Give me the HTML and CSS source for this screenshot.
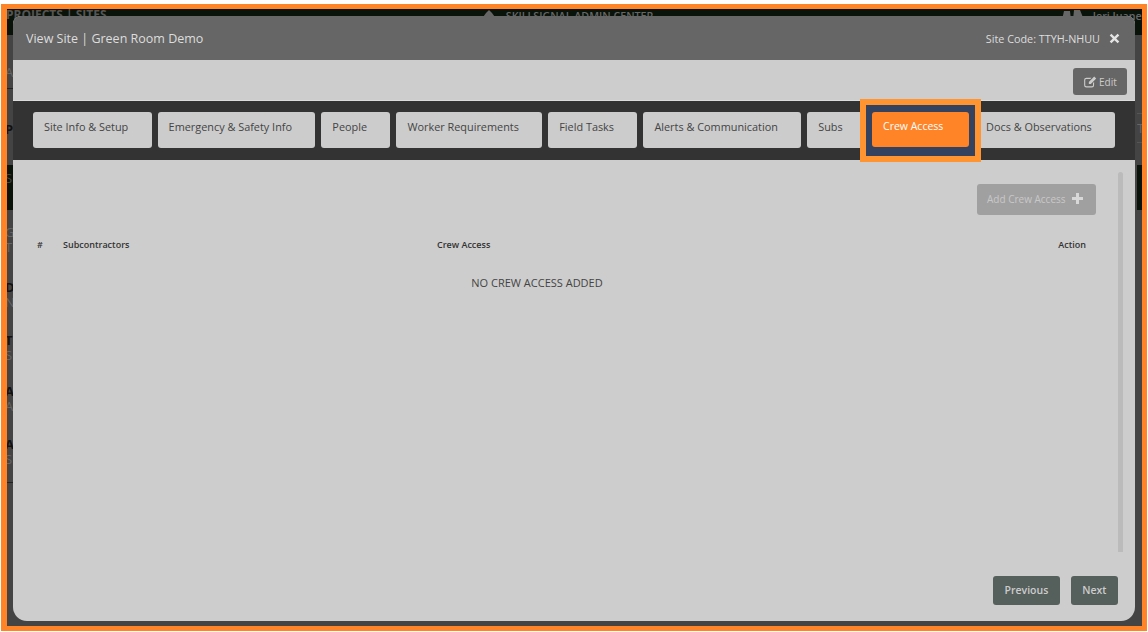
FILE: index.html
```html
<!DOCTYPE html>
<html lang="en">
  <head>
    <meta charset="utf-8" />
    <title>View Site</title>
    <link rel="stylesheet" href="styles.css">
  </head>
  <body>
    <div id="page">
      <!-- the dimmed admin page behind the modal -->
      <div id="backdrop">
        <div id="topnav">
          <span class="nav-title">PROJECTS | SITES</span>
          <span class="nav-center">
            <svg class="nav-logo" viewBox="0 0 16 10"><path d="M0 10 L5 3 L8 0 L11 3 L16 10 Z"/></svg>
            SKILLSIGNAL ADMIN CENTER
          </span>
          <span class="nav-user">
            <svg class="nav-logo" viewBox="0 0 24 10"><path d="M0 10 L2 1 L8 1 L9 10 Z M11 10 L12 0 L18 0 L22 10 Z"/></svg>
            Jeri Juaner
          </span>
        </div>
        <div id="backrows">
          <div class="side side-left">
            <div></div>
            <div class="frag">A</div>
            <div class="rule"></div>
            <div></div>
            <div class="frag frag-dark">P</div>
            <div></div>
            <div class="band">S</div>
            <div></div>
            <div class="frag">G</div>
            <div class="frag">T</div>
            <div></div>
            <div class="frag frag-dark">D</div>
            <div class="frag">N</div>
            <div></div>
            <div class="frag frag-dark">T</div>
            <div class="frag">S</div>
            <div></div>
            <div class="frag frag-dark">A</div>
            <div class="frag">A</div>
            <div></div>
            <div class="frag frag-dark">A</div>
            <div class="frag">S</div>
            <div></div>
            <div class="rule"></div>
          </div>
          <div class="side side-right">
            <div></div>
            <div class="cell">TE</div>
            <div></div>
            <div class="band"></div>
          </div>
        </div>
      </div>

      <div id="modal">
        <div id="modal-head">
          <span class="modal-title">View Site | Green Room Demo</span>
          <span class="site-code">Site Code: TTYH-NHUU</span>
          <svg class="icon-close" viewBox="0 0 12 12"><path d="M2.6 .8 L6 4.2 L9.4 .8 L11.2 2.6 L7.8 6 L11.2 9.4 L9.4 11.2 L6 7.8 L2.6 11.2 L.8 9.4 L4.2 6 L.8 2.6 Z"/></svg>
        </div>

        <div id="toolbar">
          <button class="btn-edit">
            <svg class="icon-edit" viewBox="0 0 14 13"><path d="M2.5 2 H8 L6.8 3.2 H2.5 A1.2 1.2 0 0 0 1.3 4.4 V10 A1.2 1.2 0 0 0 2.5 11.2 H8.5 A1.2 1.2 0 0 0 9.7 10 V7.6 L10.9 6.4 V10 A2.4 2.4 0 0 1 8.5 12.4 H2.5 A2.4 2.4 0 0 1 .1 10 V4.4 A2.4 2.4 0 0 1 2.5 2 Z M11 .6 L13.2 2.8 L7.4 8.6 H5.2 V6.4 Z"/></svg>
            Edit
          </button>
        </div>

        <div id="tabs">
          <a class="tab">Site Info &amp; Setup</a>
          <a class="tab">Emergency &amp; Safety Info</a>
          <a class="tab">People</a>
          <a class="tab">Worker Requirements</a>
          <a class="tab">Field Tasks</a>
          <a class="tab">Alerts &amp; Communication</a>
          <a class="tab">Subs</a>
          <div class="tab-mark">
            <a class="tab active">Crew Access</a>
          </div>
          <a class="tab">Docs &amp; Observations</a>
        </div>

        <div id="content">
          <div id="content-main">
            <div class="add-row">
              <button class="btn-add">
                Add Crew Access
                <svg class="icon-plus" viewBox="0 0 11 11"><path d="M4 0 H7 V4 H11 V7 H7 V11 H4 V7 H0 V4 H4 Z"/></svg>
              </button>
            </div>
            <div class="table-head">
              <span>#</span>
              <span>Subcontractors</span>
              <span>Crew Access</span>
              <span>Action</span>
            </div>
            <div class="table-empty">NO CREW ACCESS ADDED</div>
          </div>
          <div class="scrollbar"></div>
        </div>

        <div id="modal-foot">
          <button class="btn-nav">Previous</button>
          <button class="btn-nav">Next</button>
        </div>
      </div>

      <!-- orange callout round the whole shot -->
      <div id="frame"></div>
    </div>
  </body>
</html>
```

FILE: styles.css
```css
html, body {
    margin: 0;
    padding: 0;
    background: #fff;
    font-family: "Open Sans", "Liberation Sans", sans-serif;
}

#page {
    position: relative;
    width: 1148px; height: 632px;
    overflow: hidden;
}

/* backdrop */
#backdrop {
    display: flex;
    flex-direction: column;
    height: 622px;
    margin: 4px 1px 0;
    padding-top: 5px;
    box-sizing: border-box;
    background: #444;
    color: #222;
}

#topnav {
    display: flex;
    justify-content: space-between;
    height: 26px;
    padding: 1px 0 0 5px;
    box-sizing: border-box;
    background: #0a130a;
    color: #666;
    font-size: 10.7px;
    font-weight: 600;
    line-height: 10px;
}

.nav-title { font-size: 12px; font-weight: 700; color: #555; width: 475px; white-space: nowrap; }
.nav-center { flex: 1; }
.nav-logo { height: 10px; width: auto; fill: #666; margin-right: 6px; }
.nav-user { width: 85px; overflow: hidden; white-space: nowrap; }
.nav-user .nav-logo { margin-right: 4px; }

#backrows {
    display: flex;
    justify-content: space-between;
    flex: 1;
}

.side {
    display: grid;
    overflow: hidden;
    font-size: 13px;
    line-height: 15px;
}

.side-left {
    padding-left: 4px;
    grid-template-rows: 30px 15px 9px 33px 15px 28px 45px 15px 15px 15px 25px 15px 15px 23px 15px 15px 21px 15px 15px 23px 15px 15px 15px 1px;
    width: 12px;
}

.side-right {
    width: 10px;
    grid-template-rows: 78px 30px 22px 45px;
}

.frag { color: #666; }
.frag-dark { color: #111; font-weight: 700; }
.rule { border-bottom: 1px solid #222; }
.band { margin-left: -4px; padding-left: 4px; padding-top: 6px; background: #0a130a; color: #444; }
.side-right .band { margin-left: 0; }
.cell { border-top: 1px solid #555; border-bottom: 1px solid #555; color: #666; line-height: 28px; }

/* modal */
#modal {
    position: absolute;
    top: 16px; left: 13px;
    display: flex;
    flex-direction: column;
    width: 1122px; height: 605px;
    background: #cdcdcd;
    border-radius: 8px 8px 14px 14px;
    overflow: hidden;
}

#modal-head {
    display: flex;
    align-items: center;
    flex: none;
    height: 44px;
    padding: 0 15px 0 13px;
    background: #666;
    color: #ddd;
}

.modal-title { flex: 1; font-size: 12.5px; }
.site-code { font-size: 10.8px; margin-right: 9px; }
.icon-close { width: 11px; height: 11px; fill: #e4e4e4; }

#toolbar {
    display: flex;
    justify-content: flex-end;
    flex: none;
    height: 41px;
    padding: 8px 8px 0 0;
    box-sizing: border-box;
    border-bottom: 1px solid #ddd;
}

.btn-edit {
    display: flex;
    align-items: center;
    gap: 2px;
    width: 54px; height: 27px;
    padding: 0 0 0 11px;
    border: 0;
    border-radius: 3px;
    background: #666;
    color: #ccc;
    font: 10px "Open Sans", sans-serif;
}

.icon-edit { width: 13px; height: 12px; fill: #ccc; }

#tabs {
    display: flex;
    align-items: flex-start;
    gap: 6px;
    flex: none;
    padding: 11px 0 12px 20px;
    background: #333;
}

.tab {
    display: block;
    height: 36px;
    padding: 7px 23.35px 0 11px;
    box-sizing: border-box;
    border-radius: 3px;
    background: #ccc;
    color: #444;
    font-size: 10.88px;
    line-height: 15px;
    white-space: nowrap;
}

.tab-mark {
    position: relative;
    z-index: 1;
    margin: -13px -12px -14px;
    padding: 7px 6px 9px;
    border: 6px solid #ff9430;
    background: #34425f;
}

.tab.active {
    width: 97px; height: 35px;
    padding: 7px 0 0 11px;
    background: #ff8427;
    color: #fff;
    font-size: 10.5px;
}

#content {
    display: flex;
    flex: 1;
    min-height: 0;
    padding: 12px 12px 0 24px;
}

#content-main {
    flex: 1;
    padding-top: 12px;
    color: #333;
}

.add-row {
    display: flex;
    justify-content: flex-end;
}

.btn-add {
    display: flex;
    align-items: center;
    gap: 6px;
    width: 119px; height: 31px;
    padding: 0 0 1px 10px;
    border: 0;
    border-radius: 3px;
    background: #a0a0a0;
    color: #c8c8c8;
    font: 10px "Open Sans", sans-serif;
}

.icon-plus { width: 11px; height: 11px; fill: #d8d8d8; margin-bottom: 2px; }

.table-head {
    display: grid;
    grid-template-columns: 26px 374px 1fr auto;
    margin-top: 23px;
    padding-right: 10px;
    font-size: 9px;
    font-weight: 600;
    line-height: 14px;
}

.table-empty {
    margin-top: 23px;
    padding-right: 59px;
    color: #444;
    font-size: 11px;
    line-height: 16px;
    text-align: center;
}

.scrollbar {
    flex: none;
    width: 5px;
    margin-left: 22px;
    height: 380px;
    border-radius: 3px 3px 0 0;
    background: #bbb;
}

#modal-foot {
    display: flex;
    justify-content: flex-end;
    gap: 11px;
    flex: none;
    padding: 0 17px 16px 0;
}

.btn-nav {
    height: 29px;
    padding: 0 11.5px 2px;
    border: 0;
    border-radius: 3px;
    background: #555f5c;
    color: #ccc;
    font: 600 10.5px "Open Sans", sans-serif;
}

/* callout */
#frame {
    position: absolute;
    top: 4px; left: 1px;
    width: 1146px; height: 627px;
    box-sizing: border-box;
    border: 5px solid #ff8427;
    border-left-width: 6px;
    pointer-events: none;
}
```
